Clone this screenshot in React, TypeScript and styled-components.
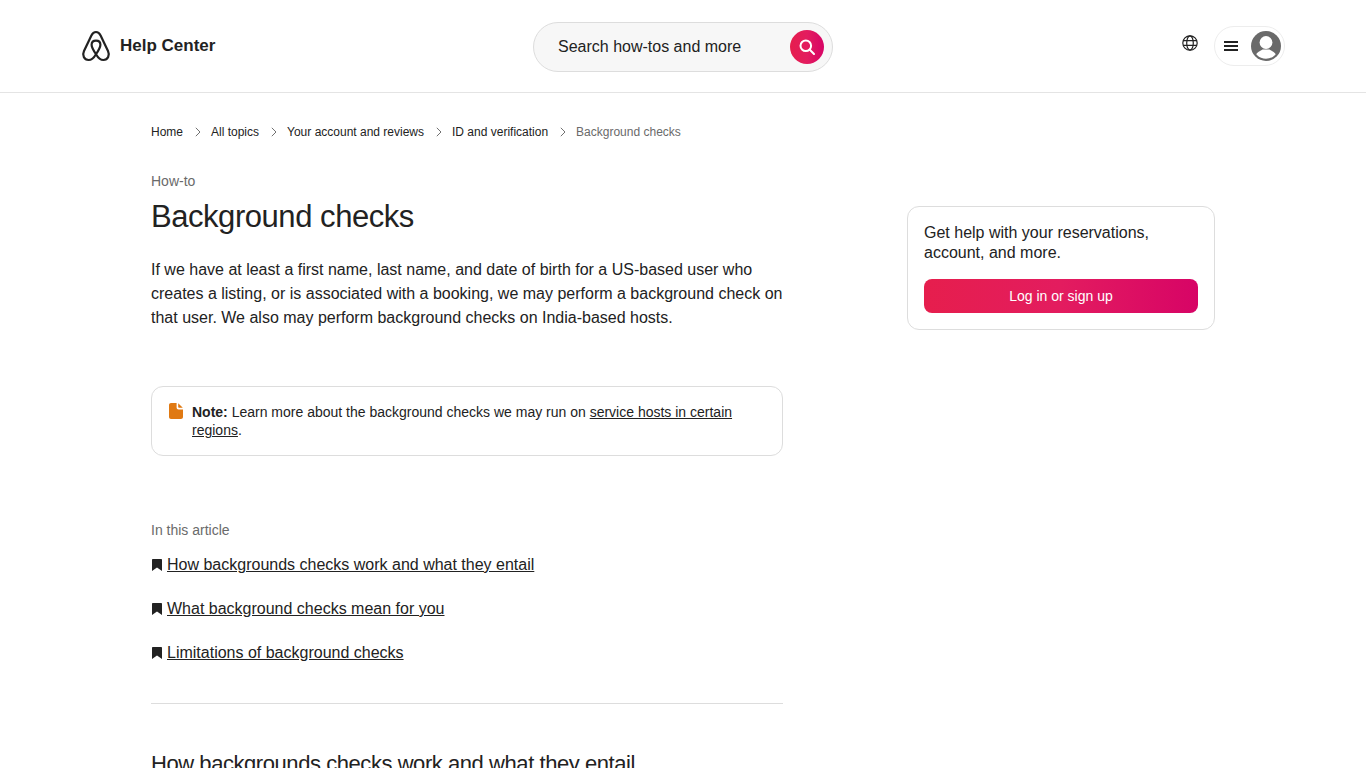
import styled, { createGlobalStyle } from "styled-components";

const BRAND_GRADIENT =
  "linear-gradient(to right, #e61e4d 0%, #e31c5f 50%, #d70466 100%)";

const CRUMBS = [
  "Home",
  "All topics",
  "Your account and reviews",
  "ID and verification",
];

const ARTICLE_LINKS = [
  "How backgrounds checks work and what they entail",
  "What background checks mean for you",
  "Limitations of background checks",
];

function Logo() {
  return (
    <svg width="30" height="32" viewBox="0 0 30 32" fill="none">
      <path
        d="M15 2C12.6 2 11.4 3.4 10.4 5.5L3 21C1 25.2 3 30 7.6 30C10.6 30 13 27.6 15 24.2C12.2 20.2 10.6 17.2 10.6 14.8C10.6 12.2 12.5 10.6 15 10.6C17.5 10.6 19.4 12.2 19.4 14.8C19.4 17.2 17.8 20.2 15 24.2C17 27.6 19.4 30 22.4 30C27 30 29 25.2 27 21L19.6 5.5C18.6 3.4 17.4 2 15 2Z"
        stroke="#222"
        strokeWidth="2.2"
        strokeLinejoin="round"
      />
    </svg>
  );
}

function SearchIcon() {
  return (
    <svg width="16" height="16" viewBox="0 0 16 16" fill="none">
      <circle cx="6.8" cy="6.8" r="5.3" stroke="#fff" strokeWidth="2" />
      <path d="M10.8 10.8L15 15" stroke="#fff" strokeWidth="2" strokeLinecap="round" />
    </svg>
  );
}

function GlobeIcon() {
  return (
    <svg width="16" height="16" viewBox="0 0 16 16" fill="none" stroke="#222" strokeWidth="1.2">
      <circle cx="8" cy="8" r="7.2" />
      <ellipse cx="8" cy="8" rx="3.3" ry="7.2" />
      <path d="M1.2 5.6H14.8M1.2 10.4H14.8" />
    </svg>
  );
}

function AvatarIcon() {
  return (
    <svg width="30" height="30" viewBox="0 0 30 30">
      <defs>
        <clipPath id="avatar-clip">
          <circle cx="15" cy="15" r="12.8" />
        </clipPath>
      </defs>
      <circle cx="15" cy="15" r="15" fill="#6a6a6a" />
      <g clipPath="url(#avatar-clip)">
        <circle cx="15" cy="11.5" r="6.4" fill="#fff" />
        <path d="M3 30C3 23 8 20.5 11.5 18.5H18.5C22 20.5 27 23 27 30Z" fill="#fff" />
      </g>
    </svg>
  );
}

function Chevron() {
  return (
    <svg width="6" height="10" viewBox="0 0 6 10" fill="none">
      <path d="M0.8 0.8L5 5L0.8 9.2" stroke="#717171" strokeWidth="1" />
    </svg>
  );
}

function NoteIcon() {
  return (
    <svg width="14" height="16" viewBox="0 0 14 16">
      <path
        d="M2 0H7.6V4.4C7.6 5.6 8.4 6.4 9.6 6.4H14V14C14 15.1 13.1 16 12 16H2C0.9 16 0 15.1 0 14V2C0 0.9 0.9 0 2 0ZM9.2 0.2L13.8 4.8H10C9.5 4.8 9.2 4.5 9.2 4Z"
        fill="#e07912"
      />
    </svg>
  );
}

function BookmarkIcon() {
  return (
    <svg width="10" height="12" viewBox="0 0 10 12">
      <path d="M1 0H9C9.6 0 10 0.4 10 1V12L5 8.6L0 12V1C0 0.4 0.4 0 1 0Z" fill="#222" />
    </svg>
  );
}

export default function App() {
  return (
    <>
      <GlobalStyle />
      <Header>
        <Brand>
          <Logo />
          <BrandName>Help Center</BrandName>
        </Brand>
        <SearchBar>
          <SearchText>Search how-tos and more</SearchText>
          <SearchButton>
            <SearchIcon />
          </SearchButton>
        </SearchBar>
        <HeaderActions>
          <GlobeButton>
            <GlobeIcon />
          </GlobeButton>
          <MenuPill>
            <Burger>
              <span />
              <span />
              <span />
            </Burger>
            <AvatarIcon />
          </MenuPill>
        </HeaderActions>
      </Header>
      <Page>
        <Article>
          <Breadcrumbs>
            {CRUMBS.map((crumb) => (
              <CrumbItem key={crumb}>
                <CrumbLink>{crumb}</CrumbLink>
                <Chevron />
              </CrumbItem>
            ))}
            <CrumbCurrent>Background checks</CrumbCurrent>
          </Breadcrumbs>
          <Eyebrow>How-to</Eyebrow>
          <Title>Background checks</Title>
          <Intro>
            If we have at least a first name, last name, and date of birth for a
            US-based user who creates a listing, or is associated with a booking,
            we may perform a background check on that user. We also may perform
            background checks on India-based hosts.
          </Intro>
          <NoteBox>
            <NoteIconSlot>
              <NoteIcon />
            </NoteIconSlot>
            <NoteText>
              <strong>Note:</strong> Learn more about the background checks we may
              run on <u>service hosts in certain regions</u>.
            </NoteText>
          </NoteBox>
          <ContentsLabel>In this article</ContentsLabel>
          <ContentsList>
            {ARTICLE_LINKS.map((link) => (
              <ContentsItem key={link}>
                <BookmarkIcon />
                <ContentsLink>{link}</ContentsLink>
              </ContentsItem>
            ))}
          </ContentsList>
          <Divider />
          <SectionTitle>How backgrounds checks work and what they entail</SectionTitle>
        </Article>
        <Aside>
          <LoginCard>
            <LoginText>Get help with your reservations, account, and more.</LoginText>
            <LoginButton>Log in or sign up</LoginButton>
          </LoginCard>
        </Aside>
      </Page>
    </>
  );
}

const GlobalStyle = createGlobalStyle`
  html, body {
    margin: 0;
    height: 768px;
    overflow: hidden;
    background: #fff;
  }
  body {
    font-family: "Liberation Sans", Arial, sans-serif;
    color: #222;
  }
  * {
    box-sizing: border-box;
  }
`;

const Header = styled.header`
  height: 93px;
  border-bottom: 1px solid #e4e4e4;
  padding: 0 81px;
  display: grid;
  grid-template-columns: 1fr 300px 1fr;
  align-items: center;
`;

const Brand = styled.div`
  display: flex;
  align-items: center;
  gap: 9px;
`;

const BrandName = styled.span`
  font-size: 17px;
  font-weight: 700;
`;

const SearchBar = styled.div`
  height: 50px;
  margin-top: 2px;
  border: 1px solid #dddddd;
  border-radius: 25px;
  background: #f7f7f7;
  padding: 0 8px 0 24px;
  display: flex;
  align-items: center;
  justify-content: space-between;
`;

const SearchText = styled.span`
  font-size: 16px;
  color: #222;
`;

const SearchButton = styled.div`
  width: 34px;
  height: 34px;
  border-radius: 50%;
  background: ${BRAND_GRADIENT};
  display: flex;
  align-items: center;
  justify-content: center;
`;

const HeaderActions = styled.div`
  display: flex;
  align-items: center;
  justify-content: flex-end;
  gap: 16px;
`;

const GlobeButton = styled.div`
  display: flex;
  margin-bottom: 6px;
`;

const MenuPill = styled.div`
  width: 71px;
  height: 40px;
  border: 1px solid #ededed;
  border-radius: 20px;
  padding: 0 3px 0 9px;
  display: flex;
  align-items: center;
  justify-content: space-between;
`;

const Burger = styled.div`
  width: 14px;
  display: flex;
  flex-direction: column;
  gap: 2px;

  span {
    height: 2px;
    background: #222;
  }
`;

const Page = styled.main`
  padding-left: 151px;
  display: grid;
  grid-template-columns: 632px 308px;
  column-gap: 124px;
`;

const Article = styled.article`
  display: flex;
  flex-direction: column;
`;

const Breadcrumbs = styled.nav`
  margin-top: 31px;
  height: 16px;
  display: flex;
  align-items: center;
  font-size: 12px;
  line-height: 16px;
`;

const CrumbItem = styled.div`
  display: flex;
  align-items: center;
  gap: 12px;
  margin-right: 10px;
`;

const CrumbLink = styled.span`
  color: #222;
`;

const CrumbCurrent = styled.span`
  color: #6a6a6a;
`;

const Eyebrow = styled.div`
  margin-top: 32px;
  font-size: 14px;
  line-height: 18px;
  color: #6a6a6a;
`;

const Title = styled.h1`
  margin: 9px 0 0;
  font-size: 31px;
  line-height: 36px;
  font-weight: 400;
  letter-spacing: -0.45px;
`;

const Intro = styled.p`
  margin: 23px 0 0;
  font-size: 16px;
  line-height: 24px;
`;

const NoteBox = styled.div`
  margin-top: 56px;
  height: 70px;
  border: 1px solid #dddddd;
  border-radius: 12px;
  padding: 16px 17px;
  display: flex;
  gap: 9px;
`;

const NoteIconSlot = styled.div`
  display: flex;
  height: 16px;
`;

const NoteText = styled.div`
  font-size: 14px;
  line-height: 18px;
`;

const ContentsLabel = styled.div`
  margin-top: 65px;
  font-size: 14px;
  line-height: 18px;
  color: #6a6a6a;
`;

const ContentsList = styled.ul`
  list-style: none;
  margin: 14px 0 0;
  padding: 0;
  display: flex;
  flex-direction: column;
  gap: 20px;
`;

const ContentsItem = styled.li`
  height: 24px;
  padding-left: 1px;
  display: flex;
  align-items: center;
  gap: 5px;
`;

const ContentsLink = styled.span`
  font-size: 16px;
  line-height: 24px;
  text-decoration: underline;
`;

const Divider = styled.hr`
  margin: 38px 0 0;
  border: 0;
  border-top: 1px solid #dddddd;
`;

const SectionTitle = styled.h2`
  margin: 47px 0 0;
  font-size: 22px;
  line-height: 26px;
  font-weight: 400;
  letter-spacing: -0.44px;
  white-space: nowrap;
`;

const Aside = styled.aside`
  padding-top: 113px;
`;

const LoginCard = styled.div`
  height: 124px;
  border: 1px solid #dddddd;
  border-radius: 12px;
  padding: 16px;
`;

const LoginText = styled.p`
  margin: 0;
  font-size: 16px;
  line-height: 20px;
`;

const LoginButton = styled.div`
  margin-top: 16px;
  height: 34px;
  border-radius: 8px;
  background: ${BRAND_GRADIENT};
  color: #fff;
  font-size: 14px;
  display: flex;
  align-items: center;
  justify-content: center;
`;
